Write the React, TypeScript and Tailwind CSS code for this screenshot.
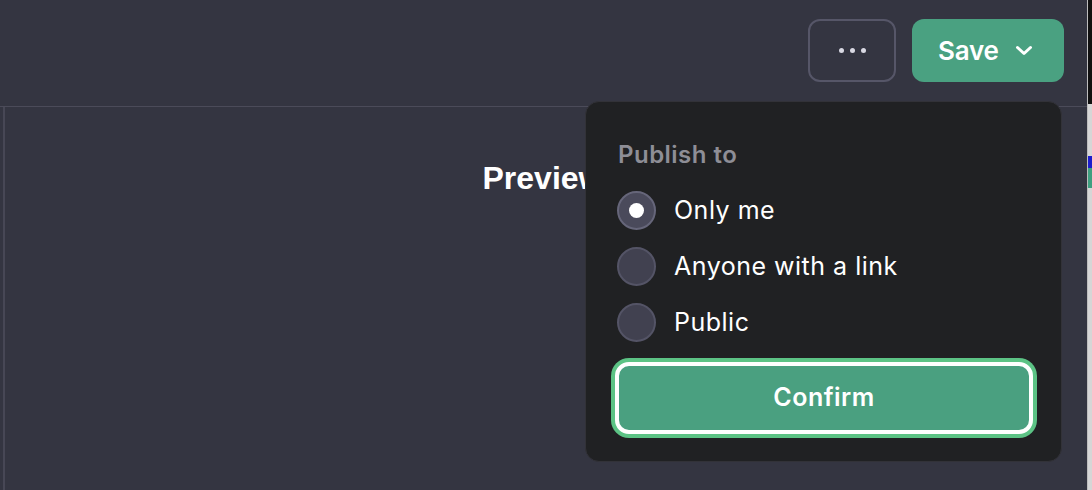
import { useState } from "react";

const options = ["Only me", "Anyone with a link", "Public"];

const Radio = ({ checked }: { checked: boolean }) => (
  <span
    className={`flex items-center justify-center w-[39px] h-[39px] rounded-full border-2 ${
      checked ? "bg-[#4a4a5b] border-[#66667a]" : "bg-[#414150] border-[#545466]"
    }`}
  >
    {checked && <span className="w-[15px] h-[15px] rounded-full bg-white" />}
  </span>
);

const App = () => {
  const [choice, setChoice] = useState(0);

  return (
    <div
      className="w-[1092px] h-[490px] flex bg-[#343541] overflow-hidden text-white"
      style={{ fontFamily: "Inter, 'Noto Sans', sans-serif" }}
    >
      <div className="flex-1 flex flex-col relative">
        <header className="h-[107px] border-b border-[#4b4b59] flex justify-end items-start pt-[19px] pr-[23px] gap-4">
          <button className="w-[88px] h-[63px] rounded-[12px] border-2 border-[#565668] flex items-center justify-center gap-[6px]">
            <span className="w-[5px] h-[5px] rounded-full bg-[#d9d9e3]" />
            <span className="w-[5px] h-[5px] rounded-full bg-[#d9d9e3]" />
            <span className="w-[5px] h-[5px] rounded-full bg-[#d9d9e3]" />
          </button>
          <button className="w-[152px] h-[63px] rounded-[12px] bg-[#4aa181] flex items-center pl-[26px] gap-4">
            <span className="text-[26px] font-semibold leading-[32px] tracking-[-0.01em]">Save</span>
            <svg width="18" height="11" viewBox="0 0 18 11" fill="none">
              <path
                d="M2.5 2.5L9 8.5L15.5 2.5"
                stroke="white"
                strokeWidth="3"
                strokeLinecap="round"
                strokeLinejoin="round"
              />
            </svg>
          </button>
        </header>

        <div className="flex-1 flex">
          <div className="w-[3px]" />
          <div className="w-[2px] bg-[#474755]" />
          <div
            className="flex-1 text-center pt-[52px] pr-[6px] text-[32px] leading-[38px] font-bold"
            style={{ fontFamily: "'Liberation Sans', Arial, sans-serif" }}
          >
            Preview
          </div>
        </div>

        <div className="absolute top-[101px] right-[25px] w-[477px] rounded-[14px] bg-[#202123] border border-[#323238] pl-[29px] pr-[28px] pt-[38px] pb-[27px]">
          <div className="pl-[3px] text-[24px] leading-[30px] font-semibold tracking-[0.02em] text-[#8e8e96]">
            Publish to
          </div>
          <div className="mt-[12px] flex flex-col">
            {options.map((label, i) => (
              <button
                key={label}
                onClick={() => setChoice(i)}
                className="h-[56px] flex items-center gap-[18px] pl-[2px] text-left"
              >
                <Radio checked={choice === i} />
                <span className="text-[25px] leading-[32px] tracking-[0.02em]">{label}</span>
              </button>
            ))}
          </div>
          <button className="mt-[12px] w-full h-[72px] rounded-[14px] bg-[#4aa080] border-4 border-white ring-4 ring-[#5cc385] text-[25px] font-semibold tracking-[0.02em]">
            Confirm
          </button>
        </div>
      </div>

      <div className="w-[5px] flex flex-col bg-[#d6d6d6] border-l border-[#bdbdbd]">
        <div className="h-[104px] bg-[#111111]" />
        <div className="h-[52px]" />
        <div className="h-[12px] bg-[#1c1ccc]" />
        <div className="h-[20px] bg-[#3f9f80]" />
      </div>
    </div>
  );
};

export default App;
